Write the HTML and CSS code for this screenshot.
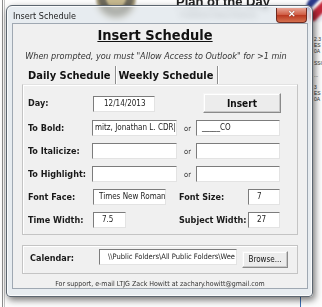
FILE: index.html
```html
<!DOCTYPE html>
<html lang="en">
<head>
    <meta charset="UTF-8">
    <meta name="viewport" content="width=device-width, initial-scale=1.0">
    <title>Insert Schedule</title>
    <link rel="stylesheet" href="styles.css">
</head>
<body>
    <div class="desktop">
        <div class="bg-lines"></div>
        <div class="bg-seal"></div>
        <div class="bg-title">Plan of the Day</div>
        <div class="bg-sub">Published Navy Reserve</div>
        <div class="bg-flag"></div>
        <div class="bg-side">2.3<br>ES<br>0A<br><br>SSO<br><br>...<br><br>3<br>ES<br>0A</div>
        <div class="bg-blue"></div>

        <div class="window">
            <div class="titlebar">
                <span class="title">Insert Schedule</span>
                <span class="close">&#x2715;</span>
            </div>
            <div class="panel">
                <h1 class="heading">Insert Schedule</h1>
                <p class="note">When prompted, you must "Allow Access to Outlook" for &gt;1 min</p>

                <div class="tabs">
                    <span class="tab active">Daily Schedule</span>
                    <span class="tab">Weekly Schedule</span>
                </div>
                <div class="page">
                    <div class="row row-day">
                        <label class="lbl">Day:</label>
                        <div class="box w-day">12/14/2013</div>
                        <button class="btn btn-insert">Insert</button>
                    </div>
                    <div class="row">
                        <label class="lbl">To Bold:</label>
                        <div class="box w-a">mitz, Jonathan L. CDR|</div>
                        <span class="or">or</span>
                        <div class="box w-b">_____CO</div>
                    </div>
                    <div class="row">
                        <label class="lbl">To Italicize:</label>
                        <div class="box w-a"></div>
                        <span class="or">or</span>
                        <div class="box w-b"></div>
                    </div>
                    <div class="row">
                        <label class="lbl">To Highlight:</label>
                        <div class="box w-a"></div>
                        <span class="or">or</span>
                        <div class="box w-b"></div>
                    </div>
                    <div class="row">
                        <label class="lbl">Font Face:</label>
                        <div class="box w-face">Times New Roman</div>
                        <label class="lbl lbl2">Font Size:</label>
                        <div class="box w-num">7</div>
                    </div>
                    <div class="row">
                        <label class="lbl">Time Width:</label>
                        <div class="box w-time">7.5</div>
                        <label class="lbl lbl2 lbl-time">Subject Width:</label>
                        <div class="box w-num">27</div>
                    </div>
                </div>

                <div class="group">
                    <label class="lbl lbl-cal">Calendar:</label>
                    <div class="box w-cal">\\Public Folders\All Public Folders\Wee</div>
                    <button class="btn btn-browse">Browse...</button>
                </div>

                <p class="footer">For support, e-mail LTJG Zack Howitt at zachary.howitt@gmail.com</p>
            </div>
        </div>
    </div>
</body>
</html>
```

FILE: styles.css
```css
* {
    box-sizing: border-box;
}

body {
    margin: 0;
    background: #ffffff;
    font-family: "DejaVu Sans Condensed", "Liberation Sans", sans-serif;
}

.desktop {
    position: relative;
    width: 322px;
    height: 307px;
    overflow: hidden;
    background: #fdfdfd;
}

/* document behind the dialog */
.bg-lines {
    position: absolute;
    left: 2px;
    top: 0;
    width: 3px;
    height: 307px;
    border-left: 1px solid #8c8c8c;
    border-right: 1px solid #c4c4c4;
}

.bg-seal {
    position: absolute;
    left: 96px;
    top: -22px;
    width: 40px;
    height: 40px;
    border-radius: 50%;
    background: radial-gradient(circle, #c7b98f 0 35%, #6e6a5c 36% 60%, #a59a7a 61%);
    filter: blur(1px);
}

.bg-title {
    position: absolute;
    left: 176px;
    top: -6px;
    font: bold 13px "Liberation Sans", sans-serif;
    color: #222;
    filter: blur(0.6px);
}

.bg-sub {
    position: absolute;
    left: 180px;
    top: 11px;
    font: 7px "Liberation Sans", sans-serif;
    color: #777;
    filter: blur(1px);
}

.bg-flag {
    position: absolute;
    left: 306px;
    top: -4px;
    width: 22px;
    height: 26px;
    background: linear-gradient(135deg, #2a3a8c 0 35%, #ffffff 36% 45%, #c2283a 46% 70%, #e8e8f0 71%);
    border-radius: 50%;
    filter: blur(0.8px);
}

.bg-side {
    position: absolute;
    left: 314px;
    top: 36px;
    font: 5px/6px "Liberation Sans", sans-serif;
    color: #333;
}

.bg-blue {
    position: absolute;
    left: 300px;
    top: 296px;
    width: 1px;
    height: 11px;
    background: #3b6fb5;
}

/* dialog window */
.window {
    position: absolute;
    left: 6px;
    top: 5px;
    width: 307px;
    height: 292px;
    padding: 0 4px 8px 5px;
    border: 1px solid #5c6670;
    border-radius: 6px 6px 4px 4px;
    background: rgba(214, 222, 230, 0.55);
    backdrop-filter: blur(3px);
    box-shadow: 2px 3px 7px rgba(0, 0, 0, 0.55), inset 0 0 0 1px rgba(255, 255, 255, 0.8);
    display: flex;
    flex-direction: column;
}

.titlebar {
    height: 21px;
    display: flex;
    justify-content: space-between;
    align-items: flex-start;
}

.title {
    margin-top: 5px;
    margin-left: 1px;
    font-size: 9px;
    color: #1c1c1c;
}

.close {
    width: 31px;
    height: 15px;
    margin-top: 2px;
    margin-right: 1px;
    border: 1px solid #6e2a20;
    border-top: none;
    border-radius: 0 0 4px 4px;
    background: linear-gradient(#e8a596, #cf5a41 50%, #b9361f 51%, #d5714f);
    color: #fff;
    font: bold 9px/13px "Liberation Sans", sans-serif;
    text-align: center;
    text-shadow: 0 0 1px #5a1a10;
}

.panel {
    flex: 1;
    background: #f0f0f0;
    border: 1px solid #9fa8b2;
    padding: 0 9px;
    display: flex;
    flex-direction: column;
}

.heading {
    margin: 2px 0 0;
    padding-right: 10px;
    text-align: center;
    font-size: 14.5px;
    font-weight: bold;
    text-decoration: underline;
    color: #111;
    line-height: 18px;
}

.note {
    margin: 6px 0 0;
    padding-right: 8px;
    text-align: center;
    font-size: 9px;
    font-style: italic;
    color: #333;
    line-height: 12px;
    white-space: nowrap;
}

.tabs {
    margin-top: 4px;
    padding-left: 6px;
    display: flex;
    height: 18px;
}

.tab {
    padding: 3px 4px 0 0;
    font-size: 11px;
    font-weight: bold;
    color: #111;
    border-right: 1px solid #8d8d8d;
    box-shadow: 1px 0 0 #fff;
}

.tab + .tab {
    padding-left: 3px;
}

.page {
    height: 151px;
    border: 1px solid #c4c4c4;
    border-top-color: #e2e2e2;
    box-shadow: inset 1px 1px 0 #fff;
    padding: 8px 0 0 5px;
    display: flex;
    flex-direction: column;
    gap: 7px;
}

.row {
    display: flex;
    align-items: center;
    height: 16px;
}

.row-day {
    height: 20px;
}

.lbl {
    width: 65px;
    flex: none;
    font-size: 9px;
    font-weight: bold;
    color: #1a1a1a;
    white-space: nowrap;
}

.lbl2 {
    width: 69px;
    margin-left: 13px;
}

.lbl-time {
    margin-left: 53px;
}

.box {
    height: 16px;
    flex: none;
    background: #fff;
    border: 1px solid #e3e3e3;
    border-top-color: #7c7c7c;
    border-left-color: #7c7c7c;
    font-size: 8px;
    line-height: 14px;
    padding-left: 5px;
    color: #222;
    white-space: nowrap;
    overflow: hidden;
}

.row-day .box {
    margin-top: 3px;
    align-self: flex-start;
    padding-left: 10px;
}

.w-day { width: 62px; }
.w-a { width: 85px; margin-left: -1px; padding-left: 2px; }
.w-b { width: 84px; }
.w-face { width: 73px; }
.w-time { width: 33px; padding-left: 8px; }
.w-num { width: 32px; padding-left: 8px; }

.or {
    width: 19px;
    padding-left: 7px;
    font-size: 7.5px;
    color: #333;
}

.btn {
    flex: none;
    background: #ececec;
    border: 1px solid #8a8a8a;
    border-top-color: #f4f4f4;
    border-left-color: #f4f4f4;
    box-shadow: inset -1px -1px 0 #c8c8c8, inset 1px 1px 0 #fff;
    font-family: inherit;
    color: #111;
    padding: 0;
}

.btn-insert {
    width: 78px;
    height: 20px;
    margin-left: 48px;
    font-size: 10px;
    font-weight: bold;
}

.group {
    margin-top: 10px;
    height: 29px;
    border: 1px solid #c4c4c4;
    box-shadow: inset 1px 1px 0 #fff;
    padding-left: 7px;
    display: flex;
    align-items: center;
}

.lbl-cal {
    width: 69px;
    margin-top: -3px;
}

.w-cal {
    width: 138px;
    margin-top: -5px;
    padding-left: 8px;
    font-size: 7.5px;
}

.btn-browse {
    width: 46px;
    height: 17px;
    margin-left: 5px;
    font-size: 8px;
}

.footer {
    margin: 6px 0 0;
    text-align: center;
    font-size: 7px;
    color: #333;
}
```
